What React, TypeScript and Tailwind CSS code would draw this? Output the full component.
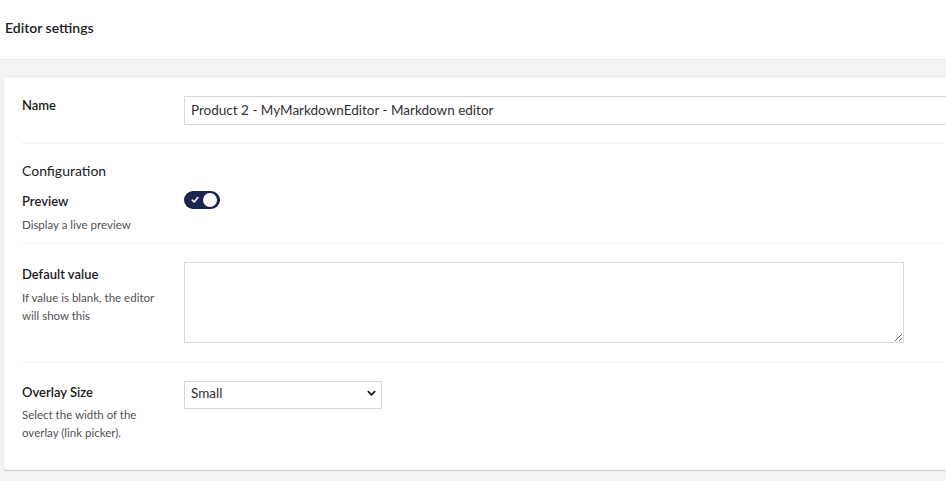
import React, { useState } from 'react';

const Toggle: React.FC<{ on: boolean; onChange: (v: boolean) => void }> = ({ on, onChange }) => (
  <button
    type="button"
    onClick={() => onChange(!on)}
    className={`relative flex items-center w-[36px] h-[18px] rounded-full ${on ? 'bg-[#1b264f]' : 'bg-[#d8d7d9]'}`}
  >
    <svg viewBox="0 0 10 10" className="absolute left-[7px] top-[5px] w-[8px] h-[8px]" fill="none" stroke="white" strokeWidth="2" strokeLinecap="round" strokeLinejoin="round">
      <path d="M1.5 5.2 L4 7.5 L8.5 2" />
    </svg>
    <span className={`absolute top-[2px] w-[14px] h-[14px] rounded-full bg-white ${on ? 'left-[19px]' : 'left-[2px]'}`} />
  </button>
);

export default function App() {
  const [name, setName] = useState('Product 2 - MyMarkdownEditor - Markdown editor');
  const [preview, setPreview] = useState(true);
  const [defaultValue, setDefaultValue] = useState('');
  const [overlay, setOverlay] = useState('small');

  return (
    <div className="w-[946px] h-[481px] overflow-hidden bg-[#f3f3f5] text-[#1b1b1d]" style={{ fontFamily: 'Lato, "Open Sans", sans-serif' }}>
      <div className="h-[60px] bg-white border-b border-[#e9e9eb] flex items-center pl-[5px] pb-[5px]">
        <h1 className="text-[14px] font-semibold text-[#1b1b1d]">Editor settings</h1>
      </div>

      <div className="ml-[4px] mt-[18px] w-[1000px] bg-white rounded-[3px] shadow-[0_1px_1px_rgba(0,0,0,0.18)] pl-[18px] pb-[28px]">
        {/* Name */}
        <div className="flex pt-[18px] pb-[18px] border-b border-[#f0f0f2]">
          <div className="w-[162px] shrink-0 pt-[1px]">
            <label className="block text-[13px] font-semibold leading-[16px]">Name</label>
          </div>
          <input
            type="text"
            value={name}
            onChange={e => setName(e.target.value)}
            className="w-[800px] h-[29px] border border-[#d8d7d9] px-[6px] pb-[1px] text-[13.5px] text-[#303033] outline-none"
          />
        </div>

        {/* Configuration */}
        <div className="pt-[18px] pb-[9px] border-b border-[#f0f0f2]">
          <div className="text-[14px] leading-[18px] text-[#1b1b1d]">Configuration</div>
          <div className="flex mt-[11px]">
            <div className="w-[162px] shrink-0 pt-[2px]">
              <div className="text-[13px] font-semibold leading-[16px]">Preview</div>
              <div className="text-[11.5px] leading-[18px] mt-[7px] text-[#515054]">Display a live preview</div>
            </div>
            <Toggle on={preview} onChange={setPreview} />
          </div>
        </div>

        {/* Default value */}
        <div className="flex pt-[18px] pb-[18px] border-b border-[#f0f0f2]">
          <div className="w-[162px] shrink-0 pt-[4px]">
            <div className="text-[13px] font-semibold leading-[16px]">Default value</div>
            <div className="text-[11.5px] leading-[18px] mt-[7px] text-[#515054] w-[140px]">If value is blank, the editor will show this</div>
          </div>
          <textarea
            value={defaultValue}
            onChange={e => setDefaultValue(e.target.value)}
            className="w-[720px] h-[81px] border border-[#d8d7d9] px-[6px] py-[4px] text-[14px] outline-none"
          />
        </div>

        {/* Overlay size */}
        <div className="flex pt-[18px]">
          <div className="w-[162px] shrink-0 pt-[4px]">
            <div className="text-[13px] font-semibold leading-[16px]">Overlay Size</div>
            <div className="text-[11.5px] leading-[18px] mt-[6px] text-[#515054] w-[130px]">Select the width of the overlay (link picker).</div>
          </div>
          <div className="relative w-[198px] h-[28px]">
            <select
              value={overlay}
              onChange={e => setOverlay(e.target.value)}
              className="appearance-none w-full h-full border border-[#d8d7d9] bg-white pl-[6px] pb-[3px] text-[13.5px] text-[#303033] outline-none"
            >
              <option value="small">Small</option>
              <option value="medium">Medium</option>
              <option value="large">Large</option>
            </select>
            <svg viewBox="0 0 10 10" className="pointer-events-none absolute right-[6px] top-[9px] w-[9px] h-[9px]" fill="none" stroke="#1b1b1d" strokeWidth="2" strokeLinecap="round" strokeLinejoin="round">
              <path d="M1.5 3 L5 6.5 L8.5 3" />
            </svg>
          </div>
        </div>
      </div>
    </div>
  );
}
